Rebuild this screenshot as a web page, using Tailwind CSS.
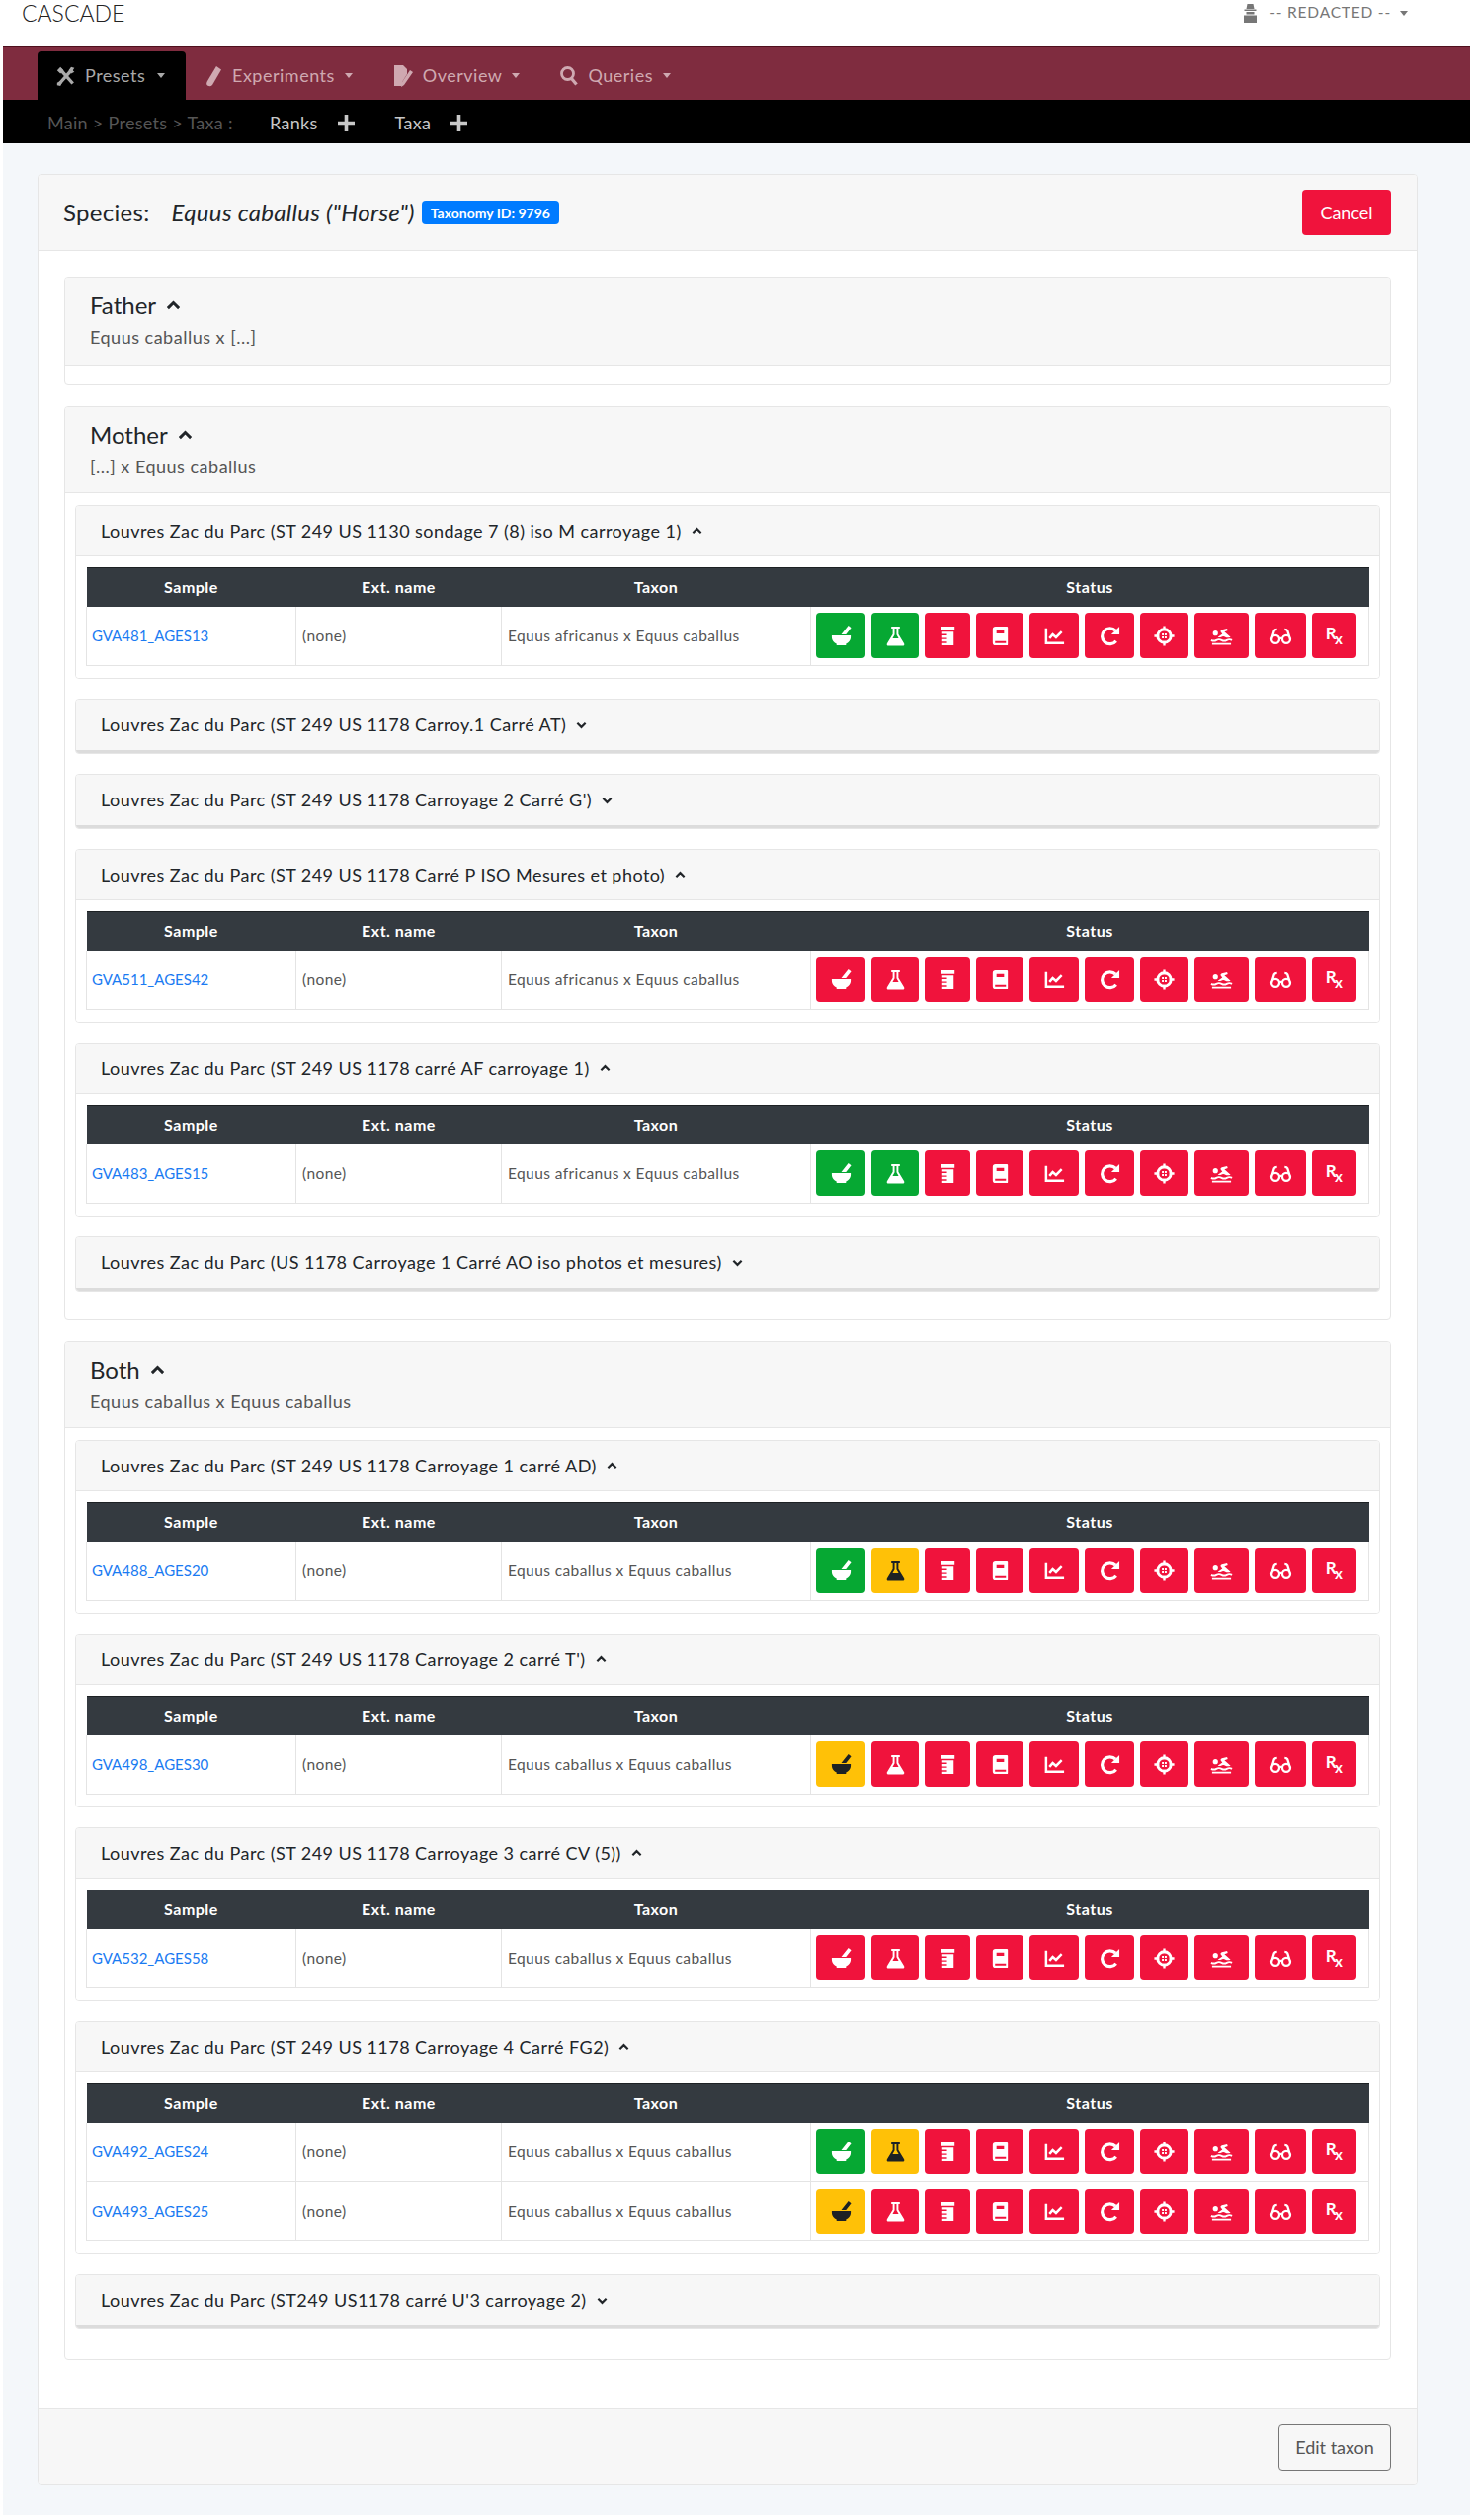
<!DOCTYPE html>
<html lang="en">
<head>
  <meta charset="UTF-8">
  <title>CASCADE - Taxa</title>
  <script src="https://cdn.jsdelivr.net/npm/@tailwindcss/browser@4"></script>
</head>
<body class="bg-white font-['Lato','Liberation_Sans',sans-serif] text-[#212529]">
  <!-- icon sheet -->
  <svg class="hidden">
    <symbol id="i-mortar" viewBox="0 0 24 24"><path fill="currentColor" d="M2 11.500h20v1.500c0 4-2.500 6-5 7.300V22H7v-1.700C4.500 19 2 17 2 13zM12 10.500L19.500 1l3 2.500-5.500 7z"/></symbol>
    <symbol id="i-flask" viewBox="0 0 24 24"><path fill="currentColor" fill-rule="evenodd" d="M7.500 2h9v2.200H15v6L21 20c.7 1.300-.2 2.500-1.500 2.500h-15C3.200 22.500 2.300 21.300 3 20l6-9.800v-6H7.500zM11 4.200v6.600L8.800 14.500h6.400L13 10.800V4.200z"/></symbol>
    <symbol id="i-bottle" viewBox="0 0 24 24"><path fill="currentColor" fill-rule="evenodd" d="M5 2h14v4H5zM6 7.500h12V22H6zM6 10v1.500h5V10zM6 14v1.500h5V14zM6 18v1.500h5V18z"/></symbol>
    <symbol id="i-book" viewBox="0 0 24 24"><path fill="currentColor" fill-rule="evenodd" d="M7 2h12a1 1 0 0 1 1 1v18a1 1 0 0 1-1 1H7a3 3 0 0 1-3-3V5a3 3 0 0 1 3-3zM8 6v3.500h8V6zM6.500 17.500v2H18v-2z"/></symbol>
    <symbol id="i-chart" viewBox="0 0 24 24"><path fill="none" stroke="currentColor" stroke-width="2.600" d="M3 4v15.500h19M6.500 14.500l3.500-4 3.500 3 6-6"/></symbol>
    <symbol id="i-redo" viewBox="0 0 24 24"><path fill="none" stroke="currentColor" stroke-width="3.400" d="M18.500 17.500a8.300 8.300 0 1 1-.5-11"/><path fill="currentColor" d="M13.500 10.500H22V2z"/></symbol>
    <symbol id="i-cross" viewBox="0 0 24 24"><circle cx="12" cy="12" r="7" fill="none" stroke="currentColor" stroke-width="3"/><path fill="none" stroke="currentColor" stroke-width="2.400" d="M12 1.500v5M12 17.500v5M1.500 12h5M17.500 12h5"/><path fill="currentColor" d="M9.500 9.500h2v2h-2zM12.500 9.500h2v2h-2zM9.500 12.500h2v2h-2zM12.500 12.500h2v2h-2z"/></symbol>
    <symbol id="i-swim" viewBox="0 0 24 24"><circle cx="5.500" cy="9" r="2.700" fill="currentColor"/><path fill="currentColor" d="M8 13.200L12.800 10l-1.500-2c-.7-1.200-.3-2 1-2.600l5.500-1.300.7 2.200-3.500 1.200 6.500 5.700c-2 1-4 1-5.500 0-1.500-.9-3-.9-4.500 0-1 .6-2.300.7-3.500 0z"/><path fill="none" stroke="currentColor" stroke-width="2" d="M1 16.500q2.750 1.500 5.500 0t5.500 0 5.500 0 5.500 0M2 20.500h20"/></symbol>
    <symbol id="i-glasses" viewBox="0 0 24 24"><path fill="none" stroke="currentColor" stroke-width="2.400" d="M10.500 15.500a4.200 4.200 0 1 1-8.400 0 4.200 4.200 0 1 1 8.400 0zM21.900 15.500a4.200 4.200 0 1 1-8.400 0 4.200 4.200 0 1 1 8.400 0zM10.500 15q1.500-1 3 0M2.200 15.500L5 6.500q.6-1.500 3-1.500M21.800 15.500L19 6.500q-.6-1.500-3-1.500"/></symbol>
    <symbol id="i-up" viewBox="0 0 12 8"><path fill="none" stroke="currentColor" stroke-width="2.400" d="M1.500 6.500L6 2l4.500 4.500"/></symbol>
    <symbol id="i-down" viewBox="0 0 12 8"><path fill="none" stroke="currentColor" stroke-width="2.400" d="M1.500 1.500L6 6l4.500-4.500"/></symbol>
    <symbol id="i-plus" viewBox="0 0 16 16"><path fill="none" stroke="currentColor" stroke-width="3.400" d="M8 0v16M0 8h16"/></symbol>
    <symbol id="i-caret" viewBox="0 0 10 6"><path fill="currentColor" d="M0 0h10L5 6z"/></symbol>
  </svg>

  <!-- Top header -->
  <header class="h-[47px] flex justify-between pl-[22px] pr-[66px]">
    <span class="text-[23px] font-light leading-[26px] text-[#222]">CASCADE</span>
    <div class="flex items-center gap-[12px] h-[26px] text-[#777] text-[15.500px] tracking-[0.8px]">
      <svg class="w-[15px] h-[19px]" viewBox="0 0 15 19"><path fill="#777" d="M4.500 0h6l1 5h-8zM1.500 5.500h12V7h-12zM3.500 8h8v2.500h-8zM1 11.500h13V19H1z"/></svg>
      <span class="flex items-center gap-[9px]">-- REDACTED -- <svg class="w-[8px] h-[5px]"><use href="#i-caret"/></svg></span>
    </div>
  </header>

  <div class="mx-[3px]">
    <!-- Nav -->
    <nav class="h-[54px] bg-[#7f2c3f] border-t border-[#4f0f1d] flex items-end pl-[35px] text-[18px] tracking-[0.5px] text-[#cfa9b1]">
      <a class="h-[49px] w-[150px] bg-black rounded-t-[4px] flex items-center pl-[19px] text-[#a9a9a9]">
        <svg class="w-[20px] h-[24px] mr-[9px]" viewBox="0 0 24 24"><path fill="none" stroke="currentColor" stroke-width="4" d="M5 4l15 17M19 4L4 21"/><path fill="currentColor" d="M1 5l4-4 4 4-4 4zM15 5l3-4 4 1-2 3 2 2-4 2zM1 20l4-2 2 2-2 4-4-1z"/></svg>
        Presets
        <svg class="w-[8px] h-[5px] ml-[12px]"><use href="#i-caret"/></svg>
      </a>
      <a class="h-[49px] flex items-center ml-[20px]">
        <svg class="w-[18px] h-[22px] mr-[9px]" viewBox="0 0 18 22"><path fill="currentColor" d="M11 1l5 3.500L7 20q-2 2-4.500 .8T2 16z"/></svg>
        Experiments
        <svg class="w-[8px] h-[5px] ml-[10px]"><use href="#i-caret"/></svg>
      </a>
      <a class="h-[49px] flex items-center ml-[41px]">
        <svg class="w-[21px] h-[22px] mr-[9px]" viewBox="0 0 21 22"><path fill="currentColor" d="M1 0h9l4 4v5l-5 8-1 4H1zM20 7l-9 13-3 2 .5-4L17 5z"/></svg>
        Overview
        <svg class="w-[8px] h-[5px] ml-[10px]"><use href="#i-caret"/></svg>
      </a>
      <a class="h-[49px] flex items-center ml-[41px]">
        <svg class="w-[18px] h-[22px] mr-[10px]" viewBox="0 0 18 22"><circle cx="7.500" cy="8.500" r="6" fill="none" stroke="currentColor" stroke-width="2.800"/><path stroke="currentColor" stroke-width="3.200" d="M11.500 13.500l5 6"/></svg>
        Queries
        <svg class="w-[8px] h-[5px] ml-[10px]"><use href="#i-caret"/></svg>
      </a>
    </nav>
    <!-- Breadcrumb -->
    <div class="h-[44px] bg-black flex items-center pl-[45px] pt-[3px] text-[18px] tracking-[0.3px] text-[#c8c8c8]">
      <span class="text-[#565656] w-[225px]">Main &gt; Presets &gt; Taxa :</span>
      <span>Ranks</span>
      <svg class="w-[17px] h-[17px] ml-[20px]"><use href="#i-plus"/></svg>
      <span class="ml-[41px]">Taxa</span>
      <svg class="w-[17px] h-[17px] ml-[20px]"><use href="#i-plus"/></svg>
    </div>

    <main class="bg-[#f4f7fa] h-[2400px] pt-[31px] pl-[35px] pr-[53px]">
      <section class="bg-white border border-[#e6e6e6] rounded-[4px] overflow-hidden">
        <div class="h-[77px] bg-[#f7f7f7] border-b border-[#e6e6e6] flex items-center justify-between pl-[25px] pr-[26px]">
          <div class="flex items-center text-[24px] tracking-[0.3px]">
            <span>Species:</span>
            <em class="ml-[22px]">Equus caballus ("Horse")</em>
            <span class="ml-[7px] h-[24px] px-[9px] bg-[#007bff] text-white rounded-[4px] text-[14px] tracking-normal font-bold flex items-center">Taxonomy ID: 9796</span>
          </div>
          <button class="w-[90px] h-[46px] bg-[#f0133c] text-white rounded-[4px] text-[18px]">Cancel</button>
        </div>

        <div class="h-[2183px] pt-[26px] px-[26px] flex flex-col gap-[21px]" id="groups"></div>

        <div class="h-[77px] bg-[#f7f7f7] border-t border-[#e6e6e6] flex items-center justify-end pr-[26px]">
          <button class="w-[114px] h-[47px] border border-[#777] rounded-[4px] text-[18px] text-[#555]">Edit taxon</button>
        </div>
      </section>
    </main>
  </div>
  <div class="h-[5px]"></div>

  <script>
    const G = 'bg-[#06a833] text-white', R = 'bg-[#f0133c] text-white', Y = 'bg-[#ffc107] text-[#1d2124]';
    const widths = ['w-[50px]','w-[48px]','w-[46px]','w-[48px]','w-[50px]','w-[50px]','w-[49px]','w-[55px]','w-[52px]','w-[45px]'];
    const icons = ['i-mortar','i-flask','i-bottle','i-book','i-chart','i-redo','i-cross','i-swim','i-glasses'];

    function statusCell(first, second) {
      return widths.map((w, i) => {
        const color = i === 0 ? first : i === 1 ? second : R;
        const inner = i < 9
          ? `<svg class="w-[23px] h-[23px]"><use href="#${icons[i]}"/></svg>`
          : `<span class="font-bold text-[17px] leading-none pb-[6px]">R<span class="text-[15px] relative top-[5px] -ml-[2px]">x</span></span>`;
        return `<span class="${w} h-[46px] rounded-[4px] flex items-center justify-center ${color}">${inner}</span>`;
      }).join('');
    }

    function sampleTable(rows) {
      const body = rows.map(r => `
        <tr class="h-[60px] border-b border-[#e4e4e4] text-[15.500px] tracking-[0.4px] text-[#555]">
          <td class="border-x border-[#e4e4e4] pl-[5px] tracking-normal text-[15px]"><a class="text-[#1a7bf2]">${r.id}</a></td>
          <td class="border-r border-[#e4e4e4] pl-[6px]">(none)</td>
          <td class="border-r border-[#e4e4e4] pl-[6px]">${r.taxon}</td>
          <td class="border-r border-[#e4e4e4] pl-[5px]"><div class="flex gap-[6px]">${statusCell(r.a, r.b)}</div></td>
        </tr>`).join('');
      return `
      <div class="pt-[11px] px-[10px] pb-[12px] bg-white">
        <table class="w-full table-fixed border-collapse">
          <thead>
            <tr class="h-[39px] bg-[#343a40] text-white text-[16px] tracking-[0.5px] font-bold border-t border-[#1d2124]">
              <th class="w-[212px]">Sample</th><th class="w-[208px]">Ext. name</th><th class="w-[313px]">Taxon</th><th>Status</th>
            </tr>
          </thead>
          <tbody>${body}</tbody>
        </table>
      </div>`;
    }

    function site(title, rows) {
      const head = rows
        ? 'h-[51px] border-b border-[#e6e6e6]'
        : 'h-[54px] border-b-[3px] border-[#dcdcdc]';
      return `
      <div class="border border-[#e6e6e6] rounded-[4px] overflow-hidden">
        <div class="${head} bg-[#f7f7f7] flex items-center pl-[25px] text-[18px] tracking-[0.45px]">
          ${title}
          <svg class="w-[11px] h-[8px] ml-[10px]"><use href="#${rows ? 'i-up' : 'i-down'}"/></svg>
        </div>
        ${rows ? sampleTable(rows) : ''}
      </div>`;
    }

    const af = 'Equus africanus x Equus caballus', cc = 'Equus caballus x Equus caballus';
    const prefix = 'Louvres Zac du Parc ';
    const groups = [
      { name: 'Father', sub: 'Equus caballus x [...]', h: 'h-[89px]', b: 'h-[19px]', sites: [] },
      { name: 'Mother', sub: '[...] x Equus caballus', h: 'h-[87px]', b: 'pt-[12px] px-[10px] pb-[28px]', sites: [
        ['(ST 249 US 1130 sondage 7 (8) iso M carroyage 1)', [{ id: 'GVA481_AGES13', taxon: af, a: G, b: G }]],
        ['(ST 249 US 1178 Carroy.1 Carré AT)'],
        ['(ST 249 US 1178 Carroyage 2 Carré G\')'],
        ['(ST 249 US 1178 Carré P ISO Mesures et photo)', [{ id: 'GVA511_AGES42', taxon: af, a: R, b: R }]],
        ['(ST 249 US 1178 carré AF carroyage 1)', [{ id: 'GVA483_AGES15', taxon: af, a: G, b: G }]],
        ['(US 1178 Carroyage 1 Carré AO iso photos et mesures)'],
      ]},
      { name: 'Both', sub: 'Equus caballus x Equus caballus', h: 'h-[87px]', b: 'pt-[12px] px-[10px] pb-[30px]', sites: [
        ['(ST 249 US 1178 Carroyage 1 carré AD)', [{ id: 'GVA488_AGES20', taxon: cc, a: G, b: Y }]],
        ['(ST 249 US 1178 Carroyage 2 carré T\')', [{ id: 'GVA498_AGES30', taxon: cc, a: Y, b: R }]],
        ['(ST 249 US 1178 Carroyage 3 carré CV (5))', [{ id: 'GVA532_AGES58', taxon: cc, a: R, b: R }]],
        ['(ST 249 US 1178 Carroyage 4 Carré FG2)', [
          { id: 'GVA492_AGES24', taxon: cc, a: G, b: Y },
          { id: 'GVA493_AGES25', taxon: cc, a: Y, b: R },
        ]],
        ['(ST249 US1178 carré U\'3 carroyage 2)'],
      ]},
    ];

    document.getElementById('groups').innerHTML = groups.map(g => `
      <div class="border border-[#e6e6e6] rounded-[4px] overflow-hidden">
        <div class="${g.h} bg-[#f7f7f7] border-b border-[#e6e6e6] pl-[25px] pt-[13px]">
          <div class="flex items-center text-[24px] leading-[30px]">${g.name}<svg class="w-[15px] h-[10px] ml-[10px]"><use href="#i-up"/></svg></div>
          <div class="text-[18px] tracking-[0.5px] leading-[24px] mt-[5px] text-[#555]">${g.sub}</div>
        </div>
        <div class="${g.b} flex flex-col gap-[20px]">
          ${g.sites.map(s => site(prefix + s[0], s[1])).join('')}
        </div>
      </div>`).join('');
  </script>
</body>
</html>
